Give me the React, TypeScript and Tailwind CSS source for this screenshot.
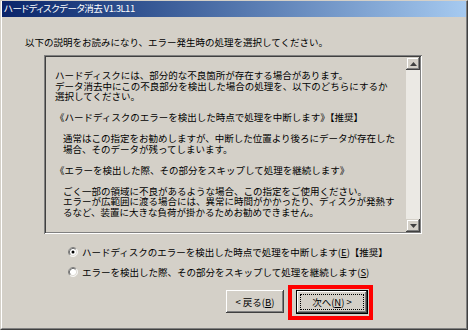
import React from 'react';

const bodyLines: { text: string; indent?: boolean }[] = [
  { text: 'ハードディスクには、部分的な不良箇所が存在する場合があります。' },
  { text: 'データ消去中にこの不良部分を検出した場合の処理を、以下のどちらにするか' },
  { text: '選択してください。' },
  { text: '' },
  { text: '《ハードディスクのエラーを検出した時点で処理を中断します》【推奨】' },
  { text: '' },
  { text: '通常はこの指定をお勧めしますが、中断した位置より後ろにデータが存在した', indent: true },
  { text: '場合、そのデータが残ってしまいます。', indent: true },
  { text: '' },
  { text: '《エラーを検出した際、その部分をスキップして処理を継続します》' },
  { text: '' },
  { text: 'ごく一部の領域に不良があるような場合、この指定をご使用ください。', indent: true },
  { text: 'エラーが広範囲に渡る場合には、異常に時間がかかったり、ディスクが発熱す', indent: true },
  { text: 'るなど、装置に大きな負荷が掛かるためお勧めできません。', indent: true },
];

function Radio({ checked }: { checked?: boolean }) {
  return (
    <svg width="10" height="10" viewBox="0 0 12 12" className="shrink-0">
      <circle cx="6" cy="6" r="5" fill="#fff" />
      <path d="M2.11 9.89 A5.5 5.5 0 0 1 9.89 2.11" stroke="#808080" fill="none" />
      <path d="M9.89 2.11 A5.5 5.5 0 0 1 2.11 9.89" stroke="#fff" fill="none" />
      <path d="M2.82 9.18 A4.5 4.5 0 0 1 9.18 2.82" stroke="#404040" fill="none" />
      <path d="M9.18 2.82 A4.5 4.5 0 0 1 2.82 9.18" stroke="#d4d0c8" fill="none" />
      {checked && <circle cx="6" cy="6" r="1.8" fill="#000" />}
    </svg>
  );
}

function Arrow({ up }: { up?: boolean }) {
  return (
    <svg width="7" height="4" viewBox="0 0 7 4">
      <polygon points={up ? '3.5,0 7,4 0,4' : '0,0 7,0 3.5,4'} fill="#404040" />
    </svg>
  );
}

export default function App() {
  return (
    <div className="w-[468px] h-[330px] overflow-hidden bg-[#d4d0c8] text-black font-['Noto_Sans_CJK_JP',sans-serif]">
      <div className="h-full flex flex-col border-t border-l border-t-[#d4d0c8] border-l-[#d4d0c8] border-r border-b border-r-[#404040] border-b-[#404040]">
        <div className="flex-1 flex flex-col border-l border-l-white border-r border-r-[#808080] border-b border-b-[#808080]">
          {/* title bar */}
          <div className="h-[16px] flex items-center pl-[2px] bg-linear-to-r from-[#0a246a] to-[#a6caf0] text-white text-[9.5px] leading-none tracking-[-0.5px] [font-feature-settings:'palt']">
            ハードディスクデータ消去 V1.3L11
          </div>

          <div className="text-[9.5px] leading-[12px] whitespace-nowrap">
            <p className="mt-[19px] pl-[23px]">
              以下の説明をお読みになり、エラー発生時の処理を選択してください。
            </p>

            {/* message box */}
            <div className="mt-[7px] ml-[42px] w-[378px] h-[179px] p-[2px] flex shadow-[inset_1px_1px_#808080,inset_-1px_-1px_#fff,inset_2px_2px_#404040,inset_-2px_-2px_#808080]">
              <div className="flex-1 pt-[13px] pl-[9px] leading-[10.5px]">
                {bodyLines.map((l, i) => (
                  <div key={i} className={l.indent ? 'pl-[8px] h-[10.5px]' : 'h-[10.5px]'}>
                    {l.text}
                  </div>
                ))}
              </div>
              <div className="w-[14px] flex flex-col bg-[#ebe9e4]">
                <div className="h-[13px] flex items-center justify-center bg-[#d4d0c8] shadow-[inset_-1px_-1px_#404040,inset_1px_1px_#d4d0c8,inset_-2px_-2px_#808080,inset_2px_2px_#fff]">
                  <Arrow up />
                </div>
                <div className="flex-1" />
                <div className="h-[13px] flex items-center justify-center bg-[#d4d0c8] shadow-[inset_-1px_-1px_#404040,inset_1px_1px_#d4d0c8,inset_-2px_-2px_#808080,inset_2px_2px_#fff]">
                  <Arrow />
                </div>
              </div>
            </div>

            {/* options */}
            <div className="mt-[12px] pl-[66px] flex flex-col gap-[8px]">
              <label className="flex items-center gap-[4px] h-[12px]">
                <Radio checked />
                <span>
                  ハードディスクのエラーを検出した時点で処理を中断します(<span className="underline">E</span>)【推奨】
                </span>
              </label>
              <label className="flex items-center gap-[4px] h-[12px]">
                <Radio />
                <span>
                  エラーを検出した際、その部分をスキップして処理を継続します(<span className="underline">S</span>)
                </span>
              </label>
            </div>

            {/* buttons */}
            <div className="mt-[7px] pl-[224px] flex items-start">
              <button className="mt-[5px] w-[58px] h-[23px] bg-[#d4d0c8] flex items-center justify-center shadow-[inset_-1px_-1px_#404040,inset_1px_1px_#fff,inset_-2px_-2px_#808080,inset_2px_2px_#d4d0c8]">
                &lt; 戻る(<span className="underline">B</span>)
              </button>
              <div className="ml-[4px] border-[4px] border-[#ff0000] pl-[4px] pr-[1px] pt-[1px] pb-[2px]">
                <button className="w-[72px] h-[24px] bg-[#d4d0c8] p-[4px] shadow-[inset_-1px_-1px_#000,inset_1px_1px_#000,inset_-2px_-2px_#404040,inset_2px_2px_#fff,inset_-3px_-3px_#808080,inset_3px_3px_#d4d0c8]">
                  <span className="h-full flex items-center justify-center border border-dotted border-black">
                    次へ(<span className="underline">N</span>) &gt;
                  </span>
                </button>
              </div>
            </div>
          </div>
        </div>
      </div>
    </div>
  );
}
